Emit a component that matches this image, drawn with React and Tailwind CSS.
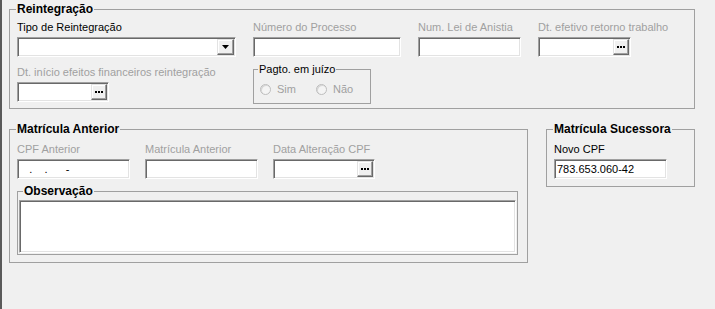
import React from 'react';

const sunken =
  'bg-white border border-t-[#a0a0a0] border-l-[#a0a0a0] border-r-white border-b-white shadow-[inset_1px_1px_0_#696969,inset_-1px_-1px_0_#e3e3e3]';
const raised =
  'bg-[#f0f0f0] border border-t-[#e3e3e3] border-l-[#e3e3e3] border-r-[#696969] border-b-[#696969] shadow-[inset_-1px_-1px_0_#a0a0a0,inset_1px_1px_0_#fff]';
const label = 'block text-[11px] leading-[13px] whitespace-nowrap mb-[3px]';

const EllipsisButton = () => (
  <div className={`${raised} w-[16px] h-[16px] flex items-center justify-center gap-[1px]`}>
    <span className="w-[2px] h-[2px] bg-black" />
    <span className="w-[2px] h-[2px] bg-black" />
    <span className="w-[2px] h-[2px] bg-black" />
  </div>
);

const DateInput = ({ width }) => (
  <div className={`${sunken} ${width} h-[20px] flex justify-end p-[1px]`}>
    <EllipsisButton />
  </div>
);

const TextInput = ({ width, value }) => (
  <div
    className={`${sunken} ${width} h-[20px] flex items-center pl-[2px] text-[11px] leading-[13px] whitespace-pre text-black`}
  >
    {value}
  </div>
);

const Field = ({ text, disabled, children }) => (
  <div>
    <span className={`${label} ${disabled ? 'text-[#a0a0a0]' : 'text-black'}`}>{text}</span>
    {children}
  </div>
);

const Radio = ({ text }) => (
  <div className="flex items-center">
    <span className="w-[11px] h-[11px] rounded-full border border-[#bdbdbd] bg-[#f4f4f4] shadow-[inset_1px_1px_0_#d6d6d6]" />
    <span className="ml-[6px] text-[11px] leading-[13px] text-[#a0a0a0]">{text}</span>
  </div>
);

const Legend = ({ children, offset = 'ml-[6px]', bold = true }) => (
  <legend
    className={`${offset} px-[1px] leading-[13px] text-black ${bold ? 'text-[12px] font-bold' : 'text-[11px]'}`}
  >
    {children}
  </legend>
);

export default function App() {
  return (
    <div className="w-[715px] h-[309px] pt-[3px] bg-[#f0f0f0] border-l-2 border-[#5a5a5a] overflow-hidden font-['Liberation_Sans',Arial,sans-serif]">
      {/* Reintegração */}
      <fieldset className="ml-[7px] w-[686px] border border-[#a0a0a0]">
        <Legend>Reintegração</Legend>
        <div className="pl-[7px] pt-[5px] pb-[4px]">
          <div className="flex gap-[17px]">
            <Field text="Tipo de Reintegração">
              <div className={`${sunken} w-[219px] h-[20px] flex justify-end p-[1px]`}>
                <div className={`${raised} w-[17px] h-[16px] flex items-center justify-center`}>
                  <svg width="7" height="4" viewBox="0 0 7 4">
                    <polygon points="0,0 7,0 3.5,4" fill="#000" />
                  </svg>
                </div>
              </div>
            </Field>
            <Field text="Número do Processo" disabled>
              <TextInput width="w-[148px]" />
            </Field>
            <Field text="Num. Lei de Anistia" disabled>
              <TextInput width="w-[103px]" />
            </Field>
            <Field text="Dt. efetivo retorno trabalho" disabled>
              <DateInput width="w-[93px]" />
            </Field>
          </div>
          <div className="flex items-start mt-[6px]">
            <div className="w-[236px] pt-[3px]">
              <Field text="Dt. início efeitos financeiros reintegração" disabled>
                <DateInput width="w-[92px]" />
              </Field>
            </div>
            <fieldset className="w-[118px] h-[41px] border border-[#a0a0a0]">
              <Legend offset="ml-[4px]" bold={false}>Pagto. em juízo</Legend>
              <div className="flex pl-[6px] pt-[7px]">
                <div className="w-[56px]">
                  <Radio text="Sim" />
                </div>
                <Radio text="Não" />
              </div>
            </fieldset>
          </div>
        </div>
      </fieldset>

      <div className="flex items-start ml-[7px] mt-[14px]">
        {/* Matrícula Anterior */}
        <fieldset className="w-[519px] border border-[#a0a0a0]">
          <Legend>Matrícula Anterior</Legend>
          <div className="pl-[7px] pt-[7px] pb-[7px]">
            <div className="flex gap-[15px]">
              <Field text="CPF Anterior" disabled>
                <TextInput width="w-[113px]" value={'   .    .      -'} />
              </Field>
              <Field text="Matrícula Anterior" disabled>
                <TextInput width="w-[113px]" />
              </Field>
              <Field text="Data Alteração CPF" disabled>
                <DateInput width="w-[102px]" />
              </Field>
            </div>
            <fieldset className="mt-[6px] w-[501px] border border-[#a0a0a0]">
              <Legend offset="ml-[5px]">Observação</Legend>
              <div className={`${sunken} mx-[1px] mt-[2px] mb-[1px] h-[53px]`} />
            </fieldset>
          </div>
        </fieldset>

        {/* Matrícula Sucessora */}
        <fieldset className="ml-[18px] w-[149px] border border-[#a0a0a0]">
          <Legend>Matrícula Sucessora</Legend>
          <div className="pl-[7px] pt-[7px] pb-[7px]">
            <Field text="Novo CPF">
              <TextInput width="w-[113px]" value="783.653.060-42" />
            </Field>
          </div>
        </fieldset>
      </div>
    </div>
  );
}
